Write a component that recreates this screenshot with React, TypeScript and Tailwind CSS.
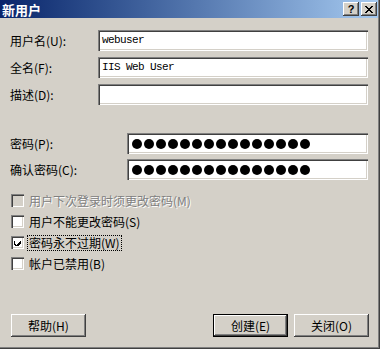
import React from "react";

const sunken =
  "bg-white shadow-[inset_1px_1px_#808080,inset_2px_2px_#404040,inset_-1px_-1px_#ffffff,inset_-2px_-2px_#d4d0c8]";
const raised =
  "bg-[#d4d0c8] shadow-[inset_-1px_-1px_#404040,inset_1px_1px_#ffffff,inset_-2px_-2px_#808080]";

function Field({ label, value, left }: { label: string; value?: string; left: number }) {
  return (
    <div className="flex items-center h-[21px]">
      <div className="pl-[10px] text-[12px] text-black" style={{ width: left }}>
        {label}
      </div>
      <div
        className={`${sunken} h-[21px] flex items-center pl-[4px] text-[11px] tracking-[-0.6px] text-black font-['Liberation_Mono',monospace]`}
        style={{ width: 368 - left }}
      >
        {value}
      </div>
    </div>
  );
}

function PasswordField({ label }: { label: string }) {
  const dots = Array.from({ length: 15 });
  return (
    <div className="flex items-center h-[21px]">
      <div className="pl-[10px] w-[127px] text-[12px] text-black">{label}</div>
      <div className={`${sunken} w-[241px] h-[21px] flex items-center pl-[5px] gap-[2px]`}>
        {dots.map((_, i) => (
          <span key={i} className="block w-[10px] h-[10px] rounded-full bg-black" />
        ))}
      </div>
    </div>
  );
}

function Check({ label, checked, disabled, focus }: { label: string; checked?: boolean; disabled?: boolean; focus?: boolean }) {
  return (
    <div className="flex items-center h-[21px] pl-[11px]">
      <div
        className={`w-[13px] h-[13px] flex items-center justify-center shadow-[inset_1px_1px_#808080,inset_2px_2px_#404040,inset_-1px_-1px_#ffffff,inset_-2px_-2px_#d4d0c8] ${
          disabled ? "bg-[#d4d0c8]" : "bg-white"
        }`}
      >
        {checked && (
          <svg width="7" height="7" viewBox="0 0 7 7" shapeRendering="crispEdges">
            <path d="M0 2h1v3h1v1h1v-1h1v-1h1v-1h1v-1h1v3h-1v1h-1v1h-1v1h-2v-1h-1v-1h-1z" fill="#000" />
          </svg>
        )}
      </div>
      <div
        className={`ml-[4px] px-[1px] text-[12px] leading-[14px] ${
          disabled ? "text-[#808080] [text-shadow:1px_1px_#ffffff]" : "text-black"
        } ${focus ? "outline outline-1 outline-dotted outline-black" : ""}`}
      >
        {label}
      </div>
    </div>
  );
}

function Btn({ label, def }: { label: string; def?: boolean }) {
  return (
    <div className={`w-[75px] h-[23px] ${def ? "border border-black" : ""}`}>
      <div className={`${raised} w-full h-full flex items-center justify-center text-[12px] text-black`}>{label}</div>
    </div>
  );
}

export default function App() {
  return (
    <div className="w-[380px] h-[349px] bg-[#d4d0c8] shadow-[inset_-1px_-1px_#404040,inset_-2px_-2px_#808080] font-['Noto_Sans_CJK_SC',sans-serif] flex flex-col overflow-hidden">
      <div className="h-[18px] mr-[2px] bg-gradient-to-r from-[#0a246a] to-[#a6caf0] flex items-center justify-between pl-[2px] pr-[1px]">
        <span className="text-white font-bold text-[13px] leading-none">新用户</span>
        <div className="flex gap-[2px]">
          <div className={`${raised} w-[16px] h-[14px] flex items-center justify-center text-[11px] font-bold leading-none text-black font-['Liberation_Sans',sans-serif]`}>?</div>
          <div className={`${raised} w-[16px] h-[14px] flex items-center justify-center`}>
            <svg width="8" height="7" viewBox="0 0 8 7" shapeRendering="crispEdges">
              <path d="M0 0h2v1h1v1h2v-1h1v-1h2v1h-1v1h-1v1h-1v1h1v1h1v1h1v1h-2v-1h-1v-1h-2v1h-1v1h-2v-1h1v-1h1v-1h1v-1h-1v-1h-1v-1h-1z" fill="#000" />
            </svg>
          </div>
        </div>
      </div>

      <div className="flex flex-col gap-[6px] mt-[12px]">
        <Field label="用户名(U):" value="webuser" left={98} />
        <Field label="全名(F):" value="IIS Web User" left={98} />
        <Field label="描述(D):" left={98} />
      </div>

      <div className="flex flex-col gap-[5px] mt-[28px]">
        <PasswordField label="密码(P):" />
        <PasswordField label="确认密码(C):" />
      </div>

      <div className="flex flex-col mt-[10px]">
        <Check label="用户下次登录时须更改密码(M)" disabled />
        <Check label="用户不能更改密码(S)" />
        <Check label="密码永不过期(W)" checked focus />
        <Check label="帐户已禁用(B)" />
      </div>

      <div className="flex mt-auto mb-[12px] px-[11px]">
        <Btn label="帮助(H)" />
        <div className="flex-1" />
        <div className="flex gap-[6px]">
          <Btn label="创建(E)" def />
          <Btn label="关闭(O)" />
        </div>
      </div>
    </div>
  );
}
